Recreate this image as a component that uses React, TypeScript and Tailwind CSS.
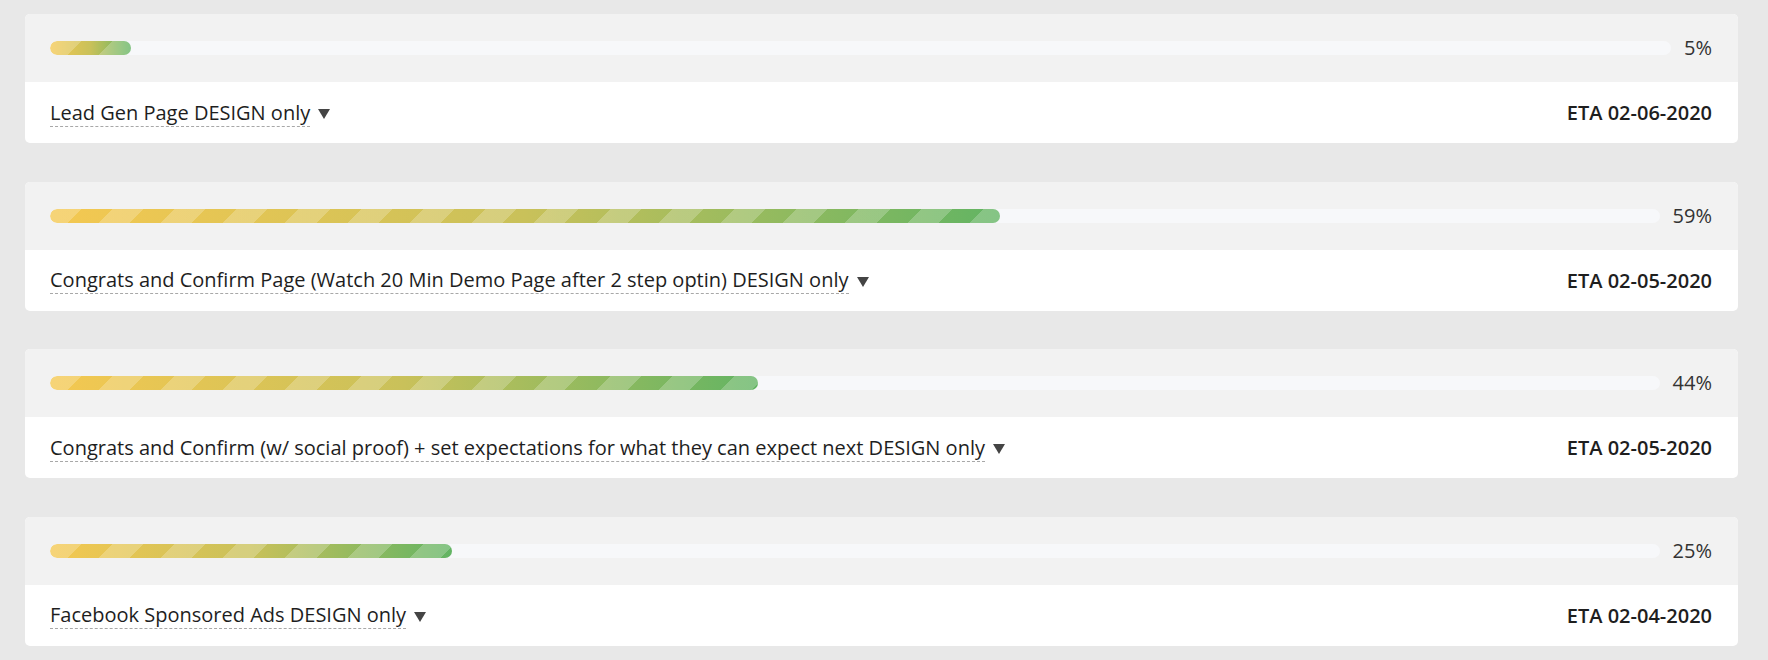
import * as React from 'react';

interface Task {
  id: number;
  title: string;
  progress: number;
  eta: string;
}

const tasks: Task[] = [
  { id: 1, title: 'Lead Gen Page DESIGN only', progress: 5, eta: '02-06-2020' },
  {
    id: 2,
    title: 'Congrats and Confirm Page (Watch 20 Min Demo Page after 2 step optin) DESIGN only',
    progress: 59,
    eta: '02-05-2020',
  },
  {
    id: 3,
    title: 'Congrats and Confirm (w/ social proof) + set expectations for what they can expect next DESIGN only',
    progress: 44,
    eta: '02-05-2020',
  },
  { id: 4, title: 'Facebook Sponsored Ads DESIGN only', progress: 25, eta: '02-04-2020' },
];

function ProgressBar({ value }: { value: number }) {
  return (
    <div className="flex items-center gap-[13px]">
      <div className="h-[14px] flex-1 overflow-hidden rounded-full bg-[#f7f8fa]">
        <div
          className="h-full rounded-full bg-[repeating-linear-gradient(135deg,rgba(255,255,255,0.22)_0px,rgba(255,255,255,0.22)_22px,transparent_22px,transparent_44px),linear-gradient(to_right,#f4c851,#c9c15a_50%,#62b463)]"
          style={{ width: `${value}%` }}
        />
      </div>
      <span className="text-[20px] leading-none text-[#333]">{value}%</span>
    </div>
  );
}

function TaskCard({ task }: { task: Task }) {
  return (
    <div className="overflow-hidden rounded-[5px] bg-white">
      {/* progress row */}
      <div className="flex h-[68px] flex-col justify-center bg-[#f2f2f2] pl-[25px] pr-[26px]">
        <ProgressBar value={task.progress} />
      </div>

      {/* title + eta */}
      <div className="flex h-[61px] items-center justify-between pl-[25px] pr-[26px]">
        <div className="flex items-center">
          <span className="border-b border-dashed border-[#a8a8a8] text-[20px] leading-[27px] text-[#1e1e1e]">
            {task.title}
          </span>
          <svg width="12" height="10" viewBox="0 0 12 10" className="ml-[8px] mt-[3px]">
            <path d="M0 0 H12 L6 10 Z" fill="#444" />
          </svg>
        </div>
        <span className="text-[20px] font-semibold leading-[27px] text-[#1e1e1e]">ETA {task.eta}</span>
      </div>
    </div>
  );
}

export default function App() {
  return (
    <div className="min-h-screen bg-[#e8e8e8] pl-[25px] pr-[30px] pt-[14px] font-['Open_Sans',sans-serif]">
      <div className="flex flex-col gap-[38.5px]">
        {tasks.map((task) => (
          <TaskCard key={task.id} task={task} />
        ))}
      </div>
    </div>
  );
}
